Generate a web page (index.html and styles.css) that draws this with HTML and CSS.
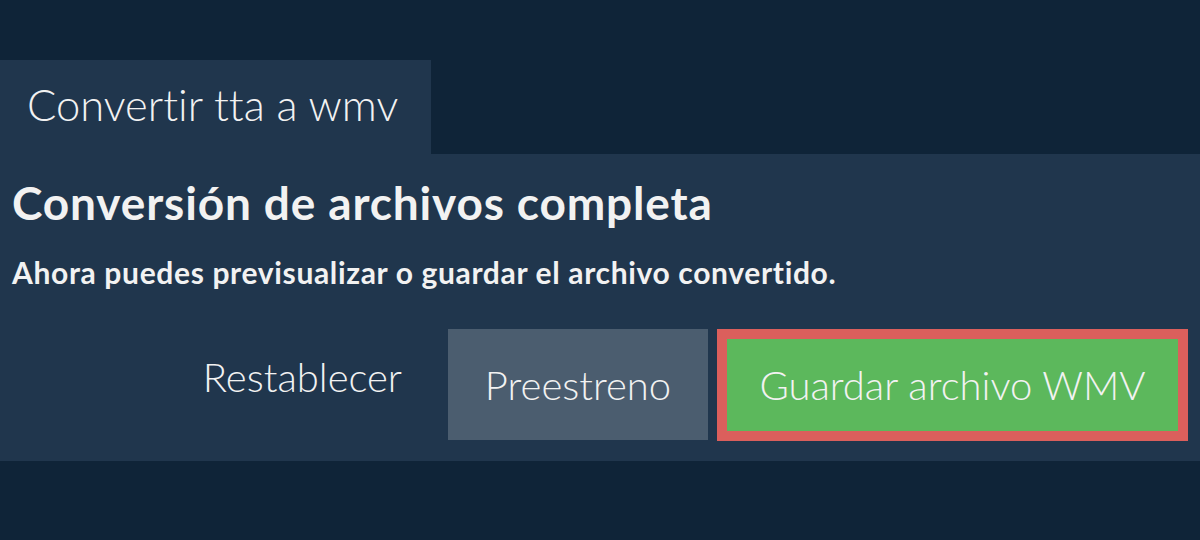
FILE: index.html
```html
<!DOCTYPE html>
<html lang="es">
<head>
  <meta charset="UTF-8" />
  <meta name="viewport" content="width=device-width, initial-scale=1.0" />
  <title>Convertir tta a wmv</title>
  <link rel="stylesheet" href="styles.css">
</head>
<body>
  <div class="page">
    <div class="tab">Convertir tta a wmv</div>
    <div class="panel">
      <h2>Conversión de archivos completa</h2>
      <p class="message">Ahora puedes previsualizar o guardar el archivo convertido.</p>
      <div class="actions">
        <button type="button" class="btn btn-link">Restablecer</button>
        <button type="button" class="btn btn-preview">Preestreno</button>
        <div class="highlight">
          <button type="button" class="btn btn-save">Guardar archivo WMV</button>
        </div>
      </div>
    </div>
  </div>
</body>
</html>
```

FILE: styles.css
```css
body {
  margin: 0;
  padding: 0;
  font-family: Lato, 'Open Sans', sans-serif;
  background: #0f2438;
  color: #f2f2f2;
  font-variant-ligatures: none;
}
.page {
  padding-top: 60px;
}
.tab {
  display: inline-block;
  vertical-align: top;
  width: 431px;
  height: 94px;
  box-sizing: border-box;
  padding-left: 27px;
  background: #20364d;
  font-size: 43.5px;
  font-weight: 300;
  line-height: 88px;
}
.panel {
  background: #20364d;
  padding: 25px 12px 20px;
}
h2 {
  margin: 0;
  font-size: 46px;
  font-weight: 700;
  line-height: 48px;
  letter-spacing: 0.85px;
}
.message {
  margin: 27px 0 0;
  font-size: 30px;
  font-weight: 700;
  line-height: 36px;
  letter-spacing: 0.65px;
}
.actions {
  display: flex;
  justify-content: flex-end;
  align-items: flex-start;
  gap: 9px;
  margin-top: 39px;
}
.btn {
  border: none;
  padding: 0;
  font-family: inherit;
  font-size: 40px;
  font-weight: 300;
  color: #f2f2f2;
  cursor: pointer;
}
.btn-link {
  align-self: center;
  background: none;
  padding: 0 37px 16px 0;
}
.btn-preview {
  width: 260px;
  height: 111px;
  background: #4b5d6f;
}
.highlight {
  border: 10px solid #db5f5c;
}
.btn-save {
  display: block;
  width: 451px;
  height: 92px;
  background: #5cb85c;
}
```
